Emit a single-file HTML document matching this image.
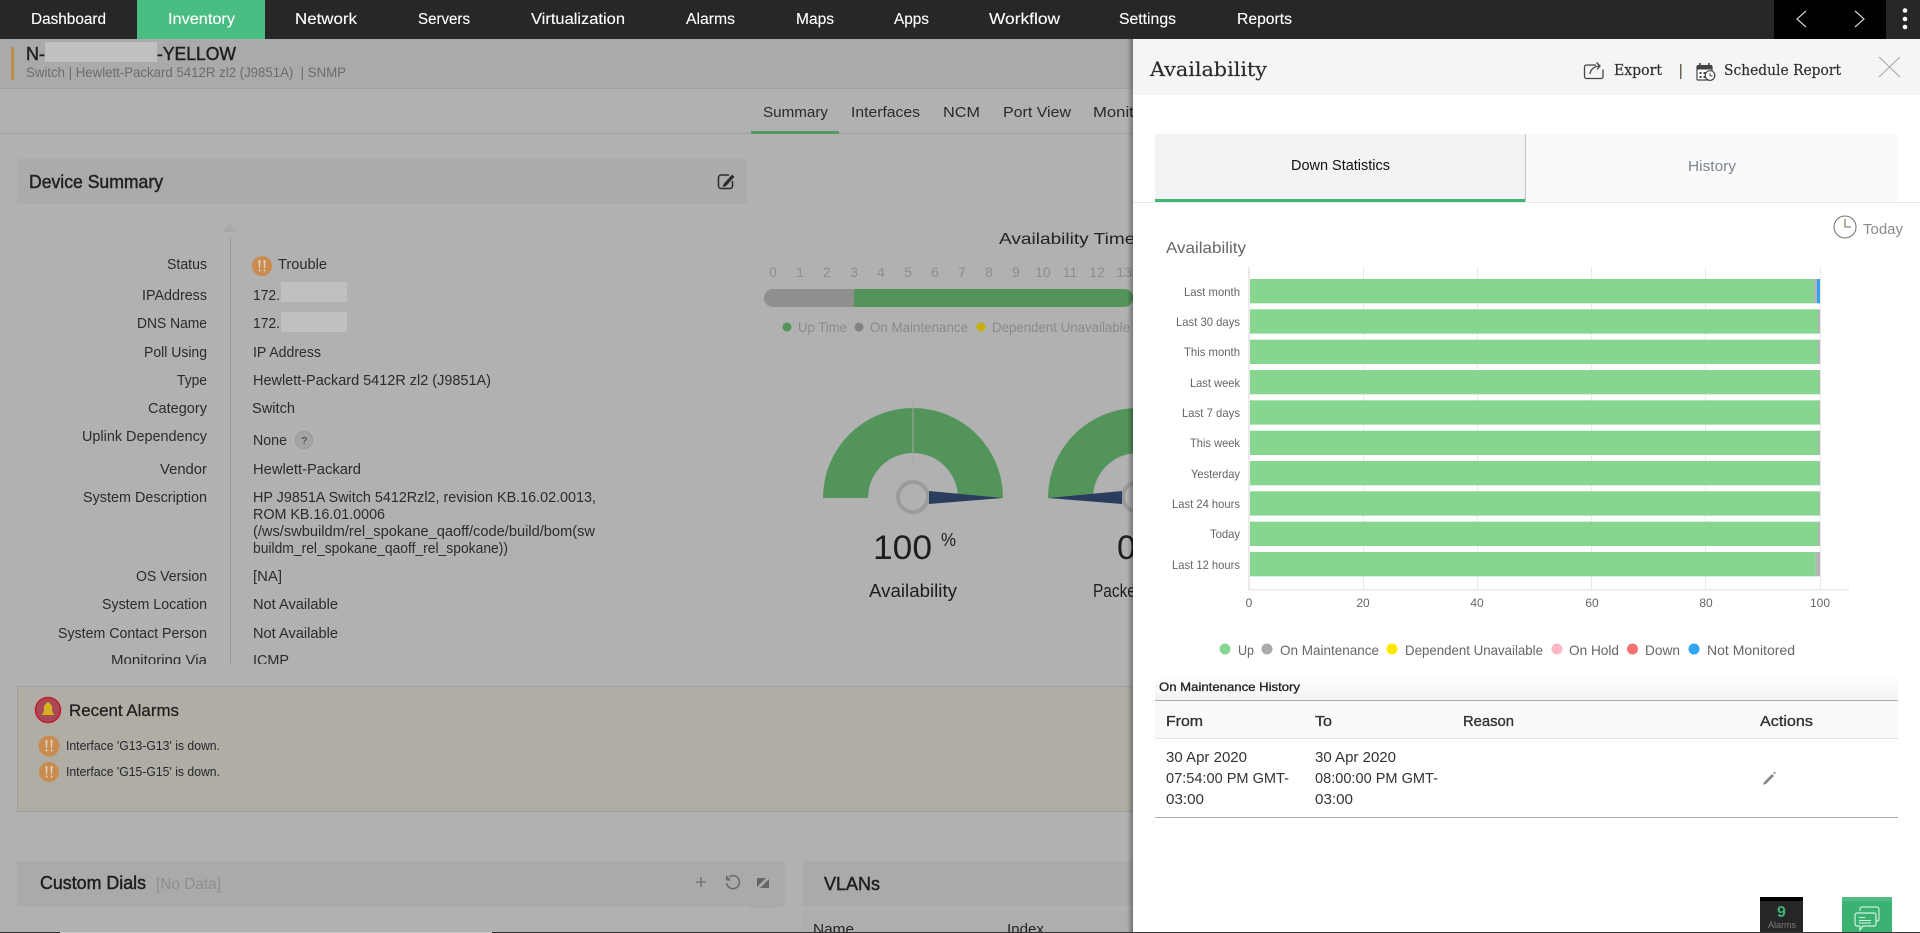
<!DOCTYPE html>
<html lang="en">
<head>
<meta charset="utf-8">
<title>Availability</title>
<style>
html,body{margin:0;padding:0;width:1920px;height:933px;overflow:hidden;background:#fff}
svg{display:block}
text{font-family:"Liberation Sans",Arial,sans-serif;white-space:pre}
.nav text{fill:#fff;font-size:15.5px;stroke:#fff;stroke-width:.12px}
.lab text{fill:#2b2b2b;font-size:14.5px}
.tab text{fill:#2a2a2a;font-size:15px}
.slab text{font-family:"DejaVu Serif","Liberation Serif",serif;fill:#2a2a2a;stroke:#2a2a2a;stroke-width:.15px}
.leg text{fill:#8a8a8a;font-size:14px}
.dg text{fill:#8e8e8e;font-size:14px;text-anchor:middle}
.cl text{fill:#666;font-size:12px}
.cx text{fill:#666;font-size:12px;text-anchor:middle}
.cleg text{fill:#666;font-size:14px}
.th text{fill:#333;font-size:15px;font-weight:400;stroke:#333;stroke-width:.35px}
.td text{fill:#333;font-size:15px}
</style>
</head>
<body>
<svg width="1920" height="933" viewBox="0 0 1920 933" xmlns="http://www.w3.org/2000/svg">
<defs>
<linearGradient id="sh" x1="0" x2="1" y1="0" y2="0"><stop offset="0" stop-color="#000" stop-opacity="0"/><stop offset="1" stop-color="#000" stop-opacity=".33"/></linearGradient>
<linearGradient id="mh" x1="0" x2="0" y1="0" y2="1"><stop offset="0" stop-color="#fff"/><stop offset="1" stop-color="#f3f3f3"/></linearGradient>
<clipPath id="bar"><rect x="764" y="289" width="369" height="18" rx="9"/></clipPath>
</defs>

<!-- dimmed page -->
<rect width="1920" height="933" fill="#b1b1b1"/>
<rect y="39" width="1133" height="49" fill="#a9aaab"/>
<rect y="88" width="1133" height="1" fill="#a0a0a0"/>
<rect y="133" width="1133" height="1" fill="#a2a2a2"/>
<rect x="11" y="47" width="3" height="33" fill="#c08a4a"/>
<text x="26" y="60" font-size="18" fill="#1e1e1e" stroke="#1e1e1e" stroke-width=".45" textLength="19" lengthAdjust="spacingAndGlyphs">N-</text>
<rect x="45" y="42" width="112" height="20" fill="#c0c0c0"/>
<text x="157" y="60" font-size="18" fill="#1e1e1e" stroke="#1e1e1e" stroke-width=".45" textLength="79" lengthAdjust="spacingAndGlyphs">-YELLOW</text>
<text x="26" y="77" font-size="13.5" fill="#6c6c6c" textLength="320" lengthAdjust="spacingAndGlyphs">Switch | Hewlett-Packard 5412R zl2 (J9851A)  | SNMP</text>

<g class="tab">
<text x="763" y="117" textLength="65" lengthAdjust="spacingAndGlyphs">Summary</text>
<text x="851" y="117" textLength="69" lengthAdjust="spacingAndGlyphs">Interfaces</text>
<text x="943" y="117" textLength="37" lengthAdjust="spacingAndGlyphs">NCM</text>
<text x="1003" y="117" textLength="68" lengthAdjust="spacingAndGlyphs">Port View</text>
<text x="1093" y="117" textLength="64" lengthAdjust="spacingAndGlyphs">Monitors</text>
</g>
<rect x="751" y="131" width="88" height="3" fill="#559a60"/>

<!-- Device summary -->
<rect x="17" y="159" width="730" height="45" fill="#a9abac"/>
<text x="29" y="188" font-size="18" fill="#222" stroke="#222" stroke-width=".45" textLength="134" lengthAdjust="spacingAndGlyphs">Device Summary</text>
<g fill="none" stroke="#2a2a2a" stroke-width="1.5">
<path d="M729 175h-8a2.500 2.500 0 0 0-2.500 2.500v8.500a2.500 2.500 0 0 0 2.500 2.500h9a2.500 2.500 0 0 0 2.500-2.500v-5"/>
<path d="M724 184l8-9 2 1.800-8 9-3 1z" fill="#2a2a2a" stroke-width=".6"/>
</g>
<path d="M222 232l7.500-8 7.500 8z" fill="#a8a8a8"/>
<rect x="230" y="238" width="1" height="426" fill="#989898"/>

<g class="lab">
<text x="167" y="269" textLength="40" lengthAdjust="spacingAndGlyphs">Status</text>
<text x="278" y="269" textLength="49" lengthAdjust="spacingAndGlyphs">Trouble</text>
<text x="142" y="300" textLength="65" lengthAdjust="spacingAndGlyphs">IPAddress</text>
<text x="253" y="300" textLength="27" lengthAdjust="spacingAndGlyphs">172.</text>
<text x="137" y="328" textLength="70" lengthAdjust="spacingAndGlyphs">DNS Name</text>
<text x="253" y="328" textLength="27" lengthAdjust="spacingAndGlyphs">172.</text>
<text x="144" y="357" textLength="63" lengthAdjust="spacingAndGlyphs">Poll Using</text>
<text x="253" y="357" textLength="68" lengthAdjust="spacingAndGlyphs">IP Address</text>
<text x="177" y="385" textLength="30" lengthAdjust="spacingAndGlyphs">Type</text>
<text x="253" y="385" textLength="238" lengthAdjust="spacingAndGlyphs">Hewlett-Packard 5412R zl2 (J9851A)</text>
<text x="148" y="413" textLength="59" lengthAdjust="spacingAndGlyphs">Category</text>
<text x="252" y="413" textLength="43" lengthAdjust="spacingAndGlyphs">Switch</text>
<text x="82" y="441" textLength="125" lengthAdjust="spacingAndGlyphs">Uplink Dependency</text>
<text x="253" y="445" textLength="34" lengthAdjust="spacingAndGlyphs">None</text>
<text x="160" y="474" textLength="47" lengthAdjust="spacingAndGlyphs">Vendor</text>
<text x="253" y="474" textLength="108" lengthAdjust="spacingAndGlyphs">Hewlett-Packard</text>
<text x="83" y="502" textLength="124" lengthAdjust="spacingAndGlyphs">System Description</text>
<text x="253" y="502" textLength="343" lengthAdjust="spacingAndGlyphs">HP J9851A Switch 5412Rzl2, revision KB.16.02.0013,</text>
<text x="253" y="519" textLength="132" lengthAdjust="spacingAndGlyphs">ROM KB.16.01.0006</text>
<text x="253" y="536" textLength="342" lengthAdjust="spacingAndGlyphs">(/ws/swbuildm/rel_spokane_qaoff/code/build/bom(sw</text>
<text x="253" y="553" textLength="255" lengthAdjust="spacingAndGlyphs">buildm_rel_spokane_qaoff_rel_spokane))</text>
<text x="136" y="581" textLength="71" lengthAdjust="spacingAndGlyphs">OS Version</text>
<text x="253" y="581" textLength="29" lengthAdjust="spacingAndGlyphs">[NA]</text>
<text x="102" y="609" textLength="105" lengthAdjust="spacingAndGlyphs">System Location</text>
<text x="253" y="609" textLength="85" lengthAdjust="spacingAndGlyphs">Not Available</text>
<text x="58" y="638" textLength="149" lengthAdjust="spacingAndGlyphs">System Contact Person</text>
<text x="253" y="638" textLength="85" lengthAdjust="spacingAndGlyphs">Not Available</text>
<text x="111" y="665" textLength="96" lengthAdjust="spacingAndGlyphs">Monitoring Via</text>
<text x="253" y="665" textLength="36" lengthAdjust="spacingAndGlyphs">ICMP</text>
</g>
<rect x="0" y="664" width="700" height="8" fill="#b1b1b1"/>

<rect x="281" y="282" width="66" height="20" fill="#c0c0c0"/>
<rect x="281" y="312" width="66" height="20" fill="#c0c0c0"/>
<circle cx="262" cy="266" r="10" fill="#c98b4e"/>
<path d="M258.500 260h2l-.4 8h-1.200zM263.500 260h2l-.4 8h-1.200zM258.700 269.500h1.700v2h-1.700zM263.700 269.500h1.700v2h-1.700z" fill="#e0d2c0"/>
<circle cx="304" cy="440" r="8.500" fill="#a5a5a5" stroke="#999" stroke-width="1"/>
<text x="301.500" y="444" font-size="10" fill="#333">?</text>

<!-- timeline -->
<text x="999" y="244" font-size="16" fill="#222" textLength="166" lengthAdjust="spacingAndGlyphs">Availability Timeline</text>
<g class="dg">
<text x="773" y="277">0</text><text x="800" y="277">1</text><text x="827" y="277">2</text><text x="854" y="277">3</text><text x="881" y="277">4</text><text x="908" y="277">5</text><text x="935" y="277">6</text><text x="962" y="277">7</text><text x="989" y="277">8</text><text x="1016" y="277">9</text><text x="1043" y="277">10</text><text x="1070" y="277">11</text><text x="1097" y="277">12</text><text x="1124" y="277">13</text>
</g>
<g clip-path="url(#bar)">
<rect x="764" y="289" width="90" height="18" fill="#8f8f90"/>
<rect x="854" y="289" width="279" height="18" fill="#53945b"/>
</g>
<circle cx="787" cy="327" r="4.500" fill="#53945b"/>
<circle cx="859" cy="327" r="4.500" fill="#838383"/>
<circle cx="981" cy="327" r="4.500" fill="#c4b100"/>
<g class="leg">
<text x="798" y="332" textLength="49" lengthAdjust="spacingAndGlyphs">Up Time</text>
<text x="870" y="332" textLength="98" lengthAdjust="spacingAndGlyphs">On Maintenance</text>
<text x="992" y="332" textLength="138" lengthAdjust="spacingAndGlyphs">Dependent Unavailable</text>
</g>

<!-- gauges -->
<path d="M823 498a90 90 0 0 1 180 0h-45a45 45 0 0 0-90 0z" fill="#53945b"/>
<rect x="912.500" y="397" width="1" height="67" fill="#a6a6a6"/>
<circle cx="913" cy="497" r="15" fill="#b1b1b1" stroke="#9b9b9b" stroke-width="4"/>
<path d="M929 491L1003 498 929 504z" fill="#2a3d5c"/>
<text x="873" y="559" font-size="34" fill="#1e1e1e" textLength="59" lengthAdjust="spacingAndGlyphs">100</text>
<text x="941" y="546" font-size="18" fill="#1e1e1e" textLength="15" lengthAdjust="spacingAndGlyphs">%</text>
<text x="869" y="597" font-size="18" fill="#1e1e1e" textLength="88" lengthAdjust="spacingAndGlyphs">Availability</text>

<path d="M1048 498a90 90 0 0 1 180 0h-45a45 45 0 0 0-90 0z" fill="#53945b"/>
<circle cx="1138" cy="497" r="15" fill="#b1b1b1" stroke="#9b9b9b" stroke-width="4"/>
<path d="M1122 491L1048 498 1122 504z" fill="#2a3d5c"/>
<text x="1117" y="559" font-size="34" fill="#1e1e1e">0</text>
<text x="1093" y="597" font-size="18" fill="#1e1e1e" textLength="84" lengthAdjust="spacingAndGlyphs">Packet Loss</text>

<!-- recent alarms -->
<rect x="17.500" y="686.500" width="1200" height="125" fill="#b0ada4" stroke="#9e9e9e"/>
<circle cx="48" cy="710" r="12.500" fill="#a84a55" stroke="#c11c2e" stroke-width="1.500"/>
<path d="M48 702c1 0 1.500.6 1.500 1.500 2 .8 2.500 2.500 2.500 5 0 3 .8 4.500 2.500 6.500h-13c1.700-2 2.500-3.500 2.500-6.500 0-2.500.5-4.200 2.500-5 0-.9.500-1.500 1.500-1.500z" fill="#d8b020"/>
<text x="69" y="716" font-size="17" fill="#1e1e1e" stroke="#1e1e1e" stroke-width=".25" textLength="110" lengthAdjust="spacingAndGlyphs">Recent Alarms</text>
<g>
<circle cx="49" cy="746" r="10.500" fill="#c98b4e"/>
<circle cx="49" cy="772" r="10" fill="#c98b4e"/>
<path d="M45.500 740h2l-.4 8h-1.200zM50.500 740h2l-.4 8h-1.200zM45.700 749.500h1.700v2h-1.700zM50.700 749.500h1.700v2h-1.700z" fill="#e0d2c0"/>
<path d="M45.500 766h2l-.4 8h-1.200zM50.500 766h2l-.4 8h-1.200zM45.700 775.500h1.700v2h-1.700zM50.700 775.500h1.700v2h-1.700z" fill="#e0d2c0"/>
</g>
<text x="66" y="750" font-size="12.500" fill="#26262f" textLength="154" lengthAdjust="spacingAndGlyphs">Interface 'G13-G13' is down.</text>
<text x="66" y="776" font-size="12.500" fill="#26262f" textLength="154" lengthAdjust="spacingAndGlyphs">Interface 'G15-G15' is down.</text>

<!-- bottom bands -->
<rect x="17" y="861" width="768" height="45" fill="#a9aaac"/>
<rect x="749" y="906" width="27" height="2" fill="#a9aaac"/>
<text x="40" y="889" font-size="18" fill="#1e1e1e" stroke="#1e1e1e" stroke-width=".45" textLength="106" lengthAdjust="spacingAndGlyphs">Custom Dials</text>
<text x="156" y="889" font-size="16" fill="#8e8e8e" textLength="65" lengthAdjust="spacingAndGlyphs">[No Data]</text>
<path d="M701 877v10M696 882h10" stroke="#6e6e6e" stroke-width="1.300" fill="none"/>
<path d="M729 877a6.500 6.500 0 1 1-2.500 6" stroke="#6a6a6a" stroke-width="1.500" fill="none"/>
<path d="M726 875v5.500h5z" fill="#6a6a6a"/>
<path d="M757 878h9l-9 9zM769 879v9h-9z" fill="#666"/>
<rect x="802" y="861" width="331" height="45" fill="#a9aaac"/>
<text x="824" y="890" font-size="18" fill="#1e1e1e" stroke="#1e1e1e" stroke-width=".45" textLength="56" lengthAdjust="spacingAndGlyphs">VLANs</text>
<rect x="802" y="910" width="331" height="23" fill="#aeaeae"/>
<text x="813" y="934" font-size="15" fill="#222" textLength="41" lengthAdjust="spacingAndGlyphs">Name</text>
<text x="1007" y="934" font-size="15" fill="#222" textLength="37" lengthAdjust="spacingAndGlyphs">Index</text>

<!-- panel -->
<rect x="1127" y="39" width="6" height="894" fill="url(#sh)"/>
<rect x="1133" y="39" width="787" height="894" fill="#fff"/>
<rect x="1133" y="39" width="787" height="56" fill="#f4f5f7"/>
<g class="slab">
<text x="1150" y="76" font-size="20" textLength="117" lengthAdjust="spacingAndGlyphs" fill="#262626">Availability</text>
<text x="1614" y="75" font-size="15" textLength="48" lengthAdjust="spacingAndGlyphs">Export</text>
<text x="1724" y="75" font-size="15" textLength="117" lengthAdjust="spacingAndGlyphs">Schedule Report</text>
</g>
<g fill="none" stroke="#444" stroke-width="1.300">
<path d="M1596 65h-9.500a2 2 0 0 0-2 2v9.500a2 2 0 0 0 2 2h14.500a2 2 0 0 0 2-2v-7"/>
<path d="M1590 74c.5-4 3.500-7.500 9-8M1596.500 62.500l3.500 3.500-3 3.500"/>
</g>
<rect x="1680" y="64" width="1.500" height="15" fill="#6f6250"/>
<g>
<rect x="1697" y="66" width="15" height="14" rx="1" fill="#fff" stroke="#444" stroke-width="1.200"/>
<rect x="1697" y="65" width="15" height="4.500" fill="#444"/>
<path d="M1700 63v3.500M1709 63v3.500" stroke="#444" stroke-width="1.600"/>
<path d="M1699.500 72h2v2h-2zM1703.500 72h2v2h-2zM1699.500 76h2v2h-2zM1703.500 76h2v2h-2z" fill="#444"/>
<circle cx="1710" cy="75.500" r="4.800" fill="#fff" stroke="#444" stroke-width="1.200"/>
<path d="M1710 73v2.800h2.500" stroke="#444" fill="none"/>
</g>
<path d="M1879 57l21 20M1900 57l-21 20" stroke="#a8a8a8" stroke-width="1.100" fill="none"/>

<!-- panel tabs -->
<rect x="1155" y="134" width="370" height="68" fill="#f2f3f5"/>
<rect x="1525" y="134" width="373" height="68" fill="#fafafa"/>
<rect x="1525" y="134" width="1" height="68" fill="#c4c4c4"/>
<rect x="1133" y="202" width="787" height="1" fill="#e8e8e8"/>
<rect x="1155" y="199" width="370" height="3" fill="#3eb475"/>
<text x="1291" y="170" font-size="15" fill="#111" textLength="99" lengthAdjust="spacingAndGlyphs">Down Statistics</text>
<text x="1688" y="171" font-size="15" fill="#7d858d" textLength="48" lengthAdjust="spacingAndGlyphs">History</text>
<circle cx="1845" cy="227" r="11" fill="none" stroke="#777" stroke-width="1.100"/>
<path d="M1845 219v8h6" fill="none" stroke="#7a6a50" stroke-width="1.100"/>
<text x="1863" y="234" font-size="15" fill="#8a8a8a" textLength="40" lengthAdjust="spacingAndGlyphs">Today</text>
<text x="1166" y="253" font-size="16" fill="#666" textLength="80" lengthAdjust="spacingAndGlyphs">Availability</text>

<!-- chart grid -->
<g fill="#eaeaea">
<rect x="1248" y="267" width="2" height="322"/>
<rect x="1363" y="267" width="1" height="322"/>
<rect x="1477" y="267" width="1" height="322"/>
<rect x="1591" y="267" width="1" height="322"/>
<rect x="1705" y="267" width="1" height="322"/>
<rect x="1820" y="267" width="1" height="322"/>
<rect x="1248" y="589" width="601" height="1.500"/>
</g>
<!-- bars -->
<g fill="#86d68f">
<rect x="1250" y="279" width="564" height="24.300"/>
<rect x="1250" y="309.300" width="568" height="24.300"/>
<rect x="1250" y="339.700" width="568" height="24.300"/>
<rect x="1250" y="370" width="569" height="24.300"/>
<rect x="1250" y="400.300" width="569" height="24.300"/>
<rect x="1250" y="430.700" width="568.500" height="24.300"/>
<rect x="1250" y="461" width="569" height="24.300"/>
<rect x="1250" y="491.300" width="569" height="24.300"/>
<rect x="1250" y="521.700" width="568" height="24.300"/>
<rect x="1250" y="552" width="565.600" height="24.300"/>
</g>
<g fill="#b4b4b4">
<rect x="1814" y="279" width="3" height="24.300"/>
<rect x="1818" y="309.300" width="2" height="24.300"/>
<rect x="1818" y="339.700" width="2" height="24.300"/>
<rect x="1819" y="370" width="1" height="24.300"/>
<rect x="1819" y="400.300" width="1" height="24.300"/>
<rect x="1818.500" y="430.700" width="1.500" height="24.300"/>
<rect x="1819" y="461" width="1" height="24.300"/>
<rect x="1819" y="491.300" width="1" height="24.300"/>
<rect x="1818" y="521.700" width="2" height="24.300"/>
<rect x="1815.600" y="552" width="4.400" height="24.300"/>
</g>
<rect x="1817" y="279" width="3" height="24.300" fill="#2fa4f5"/>
<g class="cl">
<text x="1184" y="296" textLength="56" lengthAdjust="spacingAndGlyphs">Last month</text>
<text x="1176" y="326" textLength="64" lengthAdjust="spacingAndGlyphs">Last 30 days</text>
<text x="1184" y="356" textLength="56" lengthAdjust="spacingAndGlyphs">This month</text>
<text x="1190" y="387" textLength="50" lengthAdjust="spacingAndGlyphs">Last week</text>
<text x="1182" y="417" textLength="58" lengthAdjust="spacingAndGlyphs">Last 7 days</text>
<text x="1190" y="447" textLength="50" lengthAdjust="spacingAndGlyphs">This week</text>
<text x="1191" y="478" textLength="49" lengthAdjust="spacingAndGlyphs">Yesterday</text>
<text x="1172" y="508" textLength="68" lengthAdjust="spacingAndGlyphs">Last 24 hours</text>
<text x="1210" y="538" textLength="30" lengthAdjust="spacingAndGlyphs">Today</text>
<text x="1172" y="569" textLength="68" lengthAdjust="spacingAndGlyphs">Last 12 hours</text>
</g>
<g class="cx">
<text x="1249" y="607">0</text><text x="1363" y="607">20</text><text x="1477" y="607">40</text><text x="1592" y="607">60</text><text x="1706" y="607">80</text><text x="1820" y="607">100</text>
</g>
<!-- chart legend -->
<circle cx="1225" cy="649" r="5.500" fill="#86d68f"/>
<circle cx="1267" cy="649" r="5.500" fill="#aaa"/>
<circle cx="1392" cy="649" r="5.500" fill="#ffe800"/>
<circle cx="1557" cy="649" r="5.500" fill="#ffb6c4"/>
<circle cx="1632.500" cy="649" r="5.500" fill="#f57070"/>
<circle cx="1694" cy="649" r="5.500" fill="#2fa4f5"/>
<g class="cleg">
<text x="1238" y="655" textLength="16" lengthAdjust="spacingAndGlyphs">Up</text>
<text x="1280" y="655" textLength="99" lengthAdjust="spacingAndGlyphs">On Maintenance</text>
<text x="1405" y="655" textLength="138" lengthAdjust="spacingAndGlyphs">Dependent Unavailable</text>
<text x="1569" y="655" textLength="50" lengthAdjust="spacingAndGlyphs">On Hold</text>
<text x="1645" y="655" textLength="35" lengthAdjust="spacingAndGlyphs">Down</text>
<text x="1707" y="655" textLength="88" lengthAdjust="spacingAndGlyphs">Not Monitored</text>
</g>

<!-- table -->
<rect x="1155" y="675" width="743" height="25" fill="url(#mh)"/>
<text x="1159" y="691" font-size="12" fill="#222" stroke="#222" stroke-width=".3" textLength="141" lengthAdjust="spacingAndGlyphs">On Maintenance History</text>
<rect x="1155" y="700" width="743" height="1" fill="#aaa"/>
<rect x="1155" y="701" width="743" height="37" fill="#fafafa"/>
<rect x="1155" y="738" width="743" height="1" fill="#e2e2e2"/>
<g class="th">
<text x="1166" y="726" textLength="37" lengthAdjust="spacingAndGlyphs">From</text>
<text x="1315" y="726" textLength="17" lengthAdjust="spacingAndGlyphs">To</text>
<text x="1463" y="726" textLength="51" lengthAdjust="spacingAndGlyphs">Reason</text>
<text x="1760" y="726" textLength="53" lengthAdjust="spacingAndGlyphs">Actions</text>
</g>
<g class="td">
<text x="1166" y="762" textLength="81" lengthAdjust="spacingAndGlyphs">30 Apr 2020</text>
<text x="1166" y="783" textLength="123" lengthAdjust="spacingAndGlyphs">07:54:00 PM GMT-</text>
<text x="1166" y="804" textLength="38" lengthAdjust="spacingAndGlyphs">03:00</text>
<text x="1315" y="762" textLength="81" lengthAdjust="spacingAndGlyphs">30 Apr 2020</text>
<text x="1315" y="783" textLength="123" lengthAdjust="spacingAndGlyphs">08:00:00 PM GMT-</text>
<text x="1315" y="804" textLength="38" lengthAdjust="spacingAndGlyphs">03:00</text>
</g>
<path d="M1764 782l8-8 2 2-8 8-3 .8z" fill="#888"/>
<path d="M1773 773l1.500-1.500 1.500 1.500-1.500 1.500z" fill="#999"/>
<rect x="1155" y="817" width="743" height="1" fill="#aaa"/>

<!-- alarms widget -->
<rect x="1760" y="897" width="43" height="36" fill="#262626"/>
<rect x="1760" y="897" width="43" height="4" fill="#000"/>
<text x="1781.500" y="917" font-size="16" font-weight="700" fill="#3eb475" text-anchor="middle">9</text>
<text x="1768" y="928" font-size="9.500" fill="#7b7b7b" textLength="28" lengthAdjust="spacingAndGlyphs">Alarms</text>
<!-- chat widget -->
<rect x="1842" y="897" width="50" height="36" fill="#39b272"/>
<rect x="1842" y="897" width="50" height="4" fill="#52bd84"/>
<path d="M1860 911v-2a2 2 0 0 1 2-2h15a2 2 0 0 1 2 2v10a2 2 0 0 1-2 2h-1" fill="none" stroke="#c9ecd9" stroke-width="1.200"/>
<path d="M1857 913h17a2 2 0 0 1 2 2v9a2 2 0 0 1-2 2h-11l-3 4v-4h-3a2 2 0 0 1-2-2v-9a2 2 0 0 1 2-2z" fill="#39b272" stroke="#d8f2e4" stroke-width="1.200"/>
<path d="M1859 917.500h6M1859 920.500h12M1859 923h12" stroke="#d8f2e4" stroke-width="1.100" fill="none"/>

<!-- top nav -->
<rect width="1920" height="39" fill="#272727"/>
<rect x="137" width="128" height="39" fill="#4abe82"/>
<rect x="1774" width="112" height="39" fill="#000"/>
<g class="nav">
<text x="31" y="24" textLength="75" lengthAdjust="spacingAndGlyphs">Dashboard</text>
<text x="168" y="24" textLength="67" lengthAdjust="spacingAndGlyphs">Inventory</text>
<text x="295" y="24" textLength="62" lengthAdjust="spacingAndGlyphs">Network</text>
<text x="418" y="24" textLength="52" lengthAdjust="spacingAndGlyphs">Servers</text>
<text x="531" y="24" textLength="94" lengthAdjust="spacingAndGlyphs">Virtualization</text>
<text x="686" y="24" textLength="49" lengthAdjust="spacingAndGlyphs">Alarms</text>
<text x="796" y="24" textLength="38" lengthAdjust="spacingAndGlyphs">Maps</text>
<text x="894" y="24" textLength="35" lengthAdjust="spacingAndGlyphs">Apps</text>
<text x="989" y="24" textLength="71" lengthAdjust="spacingAndGlyphs">Workflow</text>
<text x="1119" y="24" textLength="57" lengthAdjust="spacingAndGlyphs">Settings</text>
<text x="1237" y="24" textLength="55" lengthAdjust="spacingAndGlyphs">Reports</text>
</g>
<path d="M1806 11l-9 8 9 8M1855 11l9 8-9 8" fill="none" stroke="#cfcfcf" stroke-width="1.200"/>
<circle cx="1905" cy="10.500" r="2.300" fill="#fff"/>
<circle cx="1905" cy="19" r="2.300" fill="#fff"/>
<circle cx="1905" cy="27" r="2.300" fill="#fff"/>

<!-- bottom edge -->
<rect x="0" y="932" width="60" height="1" fill="#333"/>
<rect x="60" y="932" width="432" height="1" fill="#c6c6c6"/>
<rect x="492" y="932" width="1428" height="1" fill="#333"/>
</svg>
</body>
</html>
